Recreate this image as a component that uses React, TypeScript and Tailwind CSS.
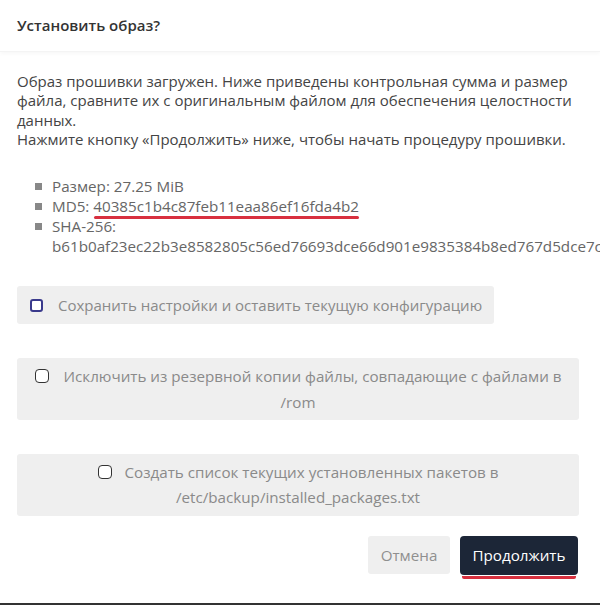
import React from "react";

function Box({ className = "" }: { className?: string }) {
  return <span className={`inline-block shrink-0 w-[14px] h-[14px] rounded-[4px] border-[1.5px] border-[#333] bg-white ${className}`} />;
}

export default function App() {
  return (
    <div className="w-[600px] h-[605px] bg-white overflow-hidden relative text-[#444]" style={{ fontFamily: '"Open Sans", "Noto Sans", sans-serif' }}>
      <div className="h-[52px] flex items-center px-[17px] shadow-[0_2px_4px_rgba(0,0,0,0.03)] border-b border-[#f4f4f4]">
        <h1 className="text-[15px] font-semibold text-[#333]">Установить образ?</h1>
      </div>
      <div className="px-[17px] pt-[20px]">
        <p className="text-[15px] leading-[19.3px] text-[#444] whitespace-nowrap">
          Образ прошивки загружен. Ниже приведены контрольная сумма и размер<br />
          файла, сравните их с оригинальным файлом для обеспечения целостности<br />
          данных.
          <br />
          Нажмите кнопку «Продолжить» ниже, чтобы начать процедуру прошивки.
        </p>
        <ul className="mt-[27px] pl-[18px] text-[15.2px] leading-[20px] text-[#666]">
          <li className="flex"><span className="w-[7px] h-[7px] bg-[#888] mt-[7px] mr-[10px] shrink-0" /><span>Размер: 27.25 MiB</span></li>
          <li className="flex"><span className="w-[7px] h-[7px] bg-[#888] mt-[7px] mr-[10px] shrink-0" /><span>MD5: <span className="relative">40385c1b4c87feb11eaa86ef16fda4b2<span className="absolute left-[1px] right-0 bottom-[-3px] h-[3px] rounded-full bg-[#d8303f]" /></span></span></li>
          <li className="flex"><span className="w-[7px] h-[7px] bg-[#888] mt-[7px] mr-[10px] shrink-0" /><span className="whitespace-nowrap">SHA-256:<br />b61b0af23ec22b3e8582805c56ed76693dce66d901e9835384b8ed767d5dce7c</span></li>
        </ul>
        <div className="mt-[30px] w-[477px] h-[38px] bg-[#efefef] rounded-[3px] flex items-center pl-[13px] gap-[15px]">
          <span className="inline-block w-[13px] h-[13px] rounded-[3px] border-2 border-[#3a3a8c] bg-white shrink-0" />
          <span className="text-[15px] text-[#8a8a8a] whitespace-nowrap">Сохранить настройки и оставить текущую конфигурацию</span>
        </div>
        <div className="mt-[34px] w-[562px] h-[62px] bg-[#efefef] rounded-[3px] flex items-center justify-center px-[16px]">
          <p className="text-center text-[15.2px] leading-[26px] text-[#8a8a8a]">
            <Box className="align-[-1px] mr-[15px]" />Исключить из резервной копии файлы, совпадающие с файлами в<br />/rom
          </p>
        </div>
        <div className="mt-[34px] w-[562px] h-[62px] bg-[#efefef] rounded-[3px] flex items-center justify-center px-[16px]">
          <p className="text-center text-[15.2px] leading-[25px] text-[#8a8a8a]">
            <Box className="align-[-1px] mr-[13px]" />Создать список текущих установленных пакетов в<br />/etc/backup/installed_packages.txt
          </p>
        </div>
        <div className="mt-[20px] flex justify-end gap-[10px] pr-[5px]">
          <button className="h-[38px] w-[82px] bg-[#efefef] rounded-[3px] text-[15.2px] text-[#8f8f8f]">Отмена</button>
          <div className="relative">
            <button className="h-[39px] w-[118px] bg-[#1c2637] rounded-[4px] text-[15.2px] text-white">Продолжить</button>
            <span className="absolute left-[2px] right-[2px] bottom-[-4px] h-[3px] bg-[#d8303f] rounded-b-[2px]" />
          </div>
        </div>
      </div>
      <div className="absolute left-0 right-0 bottom-0 h-[2px] bg-[#333]" />
    </div>
  );
}
